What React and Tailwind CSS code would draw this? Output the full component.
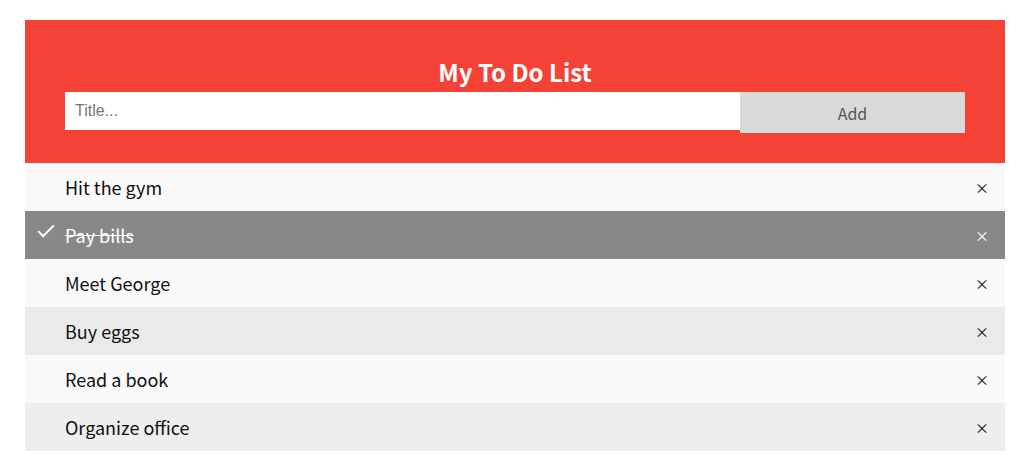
import React, { useState } from "react";

const initial = [
  { id: 1, title: "Hit the gym", done: false },
  { id: 2, title: "Pay bills", done: true },
  { id: 3, title: "Meet George", done: false },
  { id: 4, title: "Buy eggs", done: false },
  { id: 5, title: "Read a book", done: false },
  { id: 6, title: "Organize office", done: false },
];

const font = "font-['Malgun_Gothic','Noto_Sans_CJK_KR','Noto_Sans',sans-serif]";

function rowBg(item, i) {
  if (item.done) return "bg-[#888888] text-white";
  if (i === 3) return "bg-[#eaeaea] text-[#111]";
  return i % 2 === 0 ? "bg-[#f9f9f9] text-[#111]" : "bg-[#eeeeee] text-[#111]";
}

export default function App() {
  const [items, setItems] = useState(initial);
  const [title, setTitle] = useState("");

  const add = () => {
    if (!title.trim()) return;
    setItems([...items, { id: Date.now(), title, done: false }]);
    setTitle("");
  };

  return (
    <div className={`min-h-screen bg-white pt-[20px] pl-[25px] ${font}`}>
      <div className="w-[980px]">
        <div className="bg-[#f44336] px-[40px] pt-[32px] pb-[30px]">
          <h2 className="text-center text-white font-bold text-[24px] leading-[40px]">My To Do List</h2>
          <div className="flex items-start">
            <input
              value={title}
              onChange={(e) => setTitle(e.target.value)}
              placeholder="Title..."
              className="h-[38px] flex-1 bg-white px-[10px] text-[16px] text-[#333] outline-none placeholder:text-[#757575] font-['Liberation_Sans',Arial,sans-serif]"
            />
            <button
              onClick={add}
              className="h-[41px] w-[225px] bg-[#d9d9d9] text-[16px] text-[#555]"
            >
              Add
            </button>
          </div>
        </div>
        <ul>
          {items.map((item, i) => (
            <li
              key={item.id}
              onClick={() =>
                setItems(items.map((x) => (x.id === item.id ? { ...x, done: !x.done } : x)))
              }
              className={`relative flex h-[48px] items-center justify-between pl-[40px] pr-[16px] text-[18px] cursor-pointer ${rowBg(item, i)}`}
            >
              {item.done && (
                <span className="absolute left-[17px] top-[10px] h-[16px] w-[8px] rotate-45 border-b-2 border-r-2 border-white" />
              )}
              <span className={item.done ? "line-through" : ""}>{item.title}</span>
              <span
                onClick={(e) => {
                  e.stopPropagation();
                  setItems(items.filter((x) => x.id !== item.id));
                }}
                className="text-[14px]"
              >
                ×
              </span>
            </li>
          ))}
        </ul>
      </div>
    </div>
  );
}
